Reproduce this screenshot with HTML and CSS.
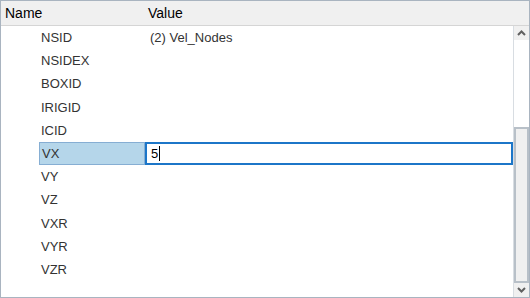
FILE: index.html
```html
<!DOCTYPE html>
<html lang="en">
<head>
    <meta charset="UTF-8">
    <title>Properties</title>
    <link rel="stylesheet" href="styles.css">
</head>
<body>
    <div class="grid">
        <div class="grid-header">
            <div class="col-name">Name</div>
            <div class="col-value">Value</div>
        </div>
        <div class="grid-body">
            <div class="rows">
                <div class="row"><div class="cell-name">NSID</div><div class="cell-value">(2) Vel_Nodes</div></div>
                <div class="row"><div class="cell-name">NSIDEX</div><div class="cell-value"></div></div>
                <div class="row"><div class="cell-name">BOXID</div><div class="cell-value"></div></div>
                <div class="row"><div class="cell-name">IRIGID</div><div class="cell-value"></div></div>
                <div class="row"><div class="cell-name">ICID</div><div class="cell-value"></div></div>
                <div class="row selected"><div class="cell-name">VX</div><div class="cell-value"><span class="editor">5<span class="caret"></span></span></div></div>
                <div class="row"><div class="cell-name">VY</div><div class="cell-value"></div></div>
                <div class="row"><div class="cell-name">VZ</div><div class="cell-value"></div></div>
                <div class="row"><div class="cell-name">VXR</div><div class="cell-value"></div></div>
                <div class="row"><div class="cell-name">VYR</div><div class="cell-value"></div></div>
                <div class="row"><div class="cell-name">VZR</div><div class="cell-value"></div></div>
            </div>
            <div class="scrollbar">
                <div class="arrow">
                    <svg width="9" height="6" viewBox="0 0 9 6"><path d="M1 5 L4.5 1.5 L8 5" fill="none" stroke="#606060" stroke-width="2"/></svg>
                </div>
                <div class="track">
                    <div class="thumb"></div>
                </div>
                <div class="arrow">
                    <svg width="9" height="6" viewBox="0 0 9 6"><path d="M1 1 L4.5 4.5 L8 1" fill="none" stroke="#606060" stroke-width="2"/></svg>
                </div>
            </div>
        </div>
    </div>
</body>
</html>
```

FILE: styles.css
```css
* {
    box-sizing: border-box;
    margin: 0;
    padding: 0;
}

body {
    font-family: 'Liberation Sans', Arial, sans-serif;
    font-size: 13px;
    color: #333333;
    background: #ffffff;
}

/* Property grid */
.grid {
    width: 530px;
    height: 298px;
    border: 1px solid #a9b4c0;
    display: flex;
    flex-direction: column;
}

.grid-header {
    height: 25px;
    display: flex;
    align-items: center;
    background: #f0f0f0;
    border-bottom: 1px solid #d5d5d5;
    color: #000000;
    font-size: 14px;
}

.col-name {
    width: 147px;
    padding-left: 4px;
}

.grid-body {
    flex: 1;
    display: flex;
    min-height: 0;
}

.rows {
    flex: 1;
}

.row {
    height: 23.2px;
    display: flex;
    align-items: center;
}

.cell-name {
    width: 144px;
    padding-left: 40px;
    height: 100%;
    display: flex;
    align-items: center;
}

.cell-value {
    flex: 1;
    height: 100%;
    display: flex;
    align-items: center;
    padding-left: 5px;
}

.row.selected .cell-name {
    background: #b5d6ea;
    border: 1px solid #86aed3;
    margin-left: 38px;
    padding-left: 2px;
    width: 106px;
}

.row.selected .cell-value {
    padding-left: 0;
}

.editor {
    display: flex;
    align-items: center;
    width: 100%;
    height: 100%;
    border: 2px solid #1c76c8;
    padding-left: 4px;
    color: #000000;
}

.caret {
    display: inline-block;
    width: 1px;
    height: 15px;
    background: #000000;
    margin-left: 1px;
}

/* Scrollbar */
.scrollbar {
    width: 16px;
    display: flex;
    flex-direction: column;
    border-left: 1px solid #d8dde2;
}

.arrow {
    height: 14px;
    display: flex;
    align-items: center;
    justify-content: center;
    background: #f0f0f0;
}

.track {
    flex: 1;
    display: flex;
    flex-direction: column;
    justify-content: flex-end;
}

.thumb {
    height: 156px;
    background: #f0f0f0;
    border: 2px solid #b8c0c8;
}
```
